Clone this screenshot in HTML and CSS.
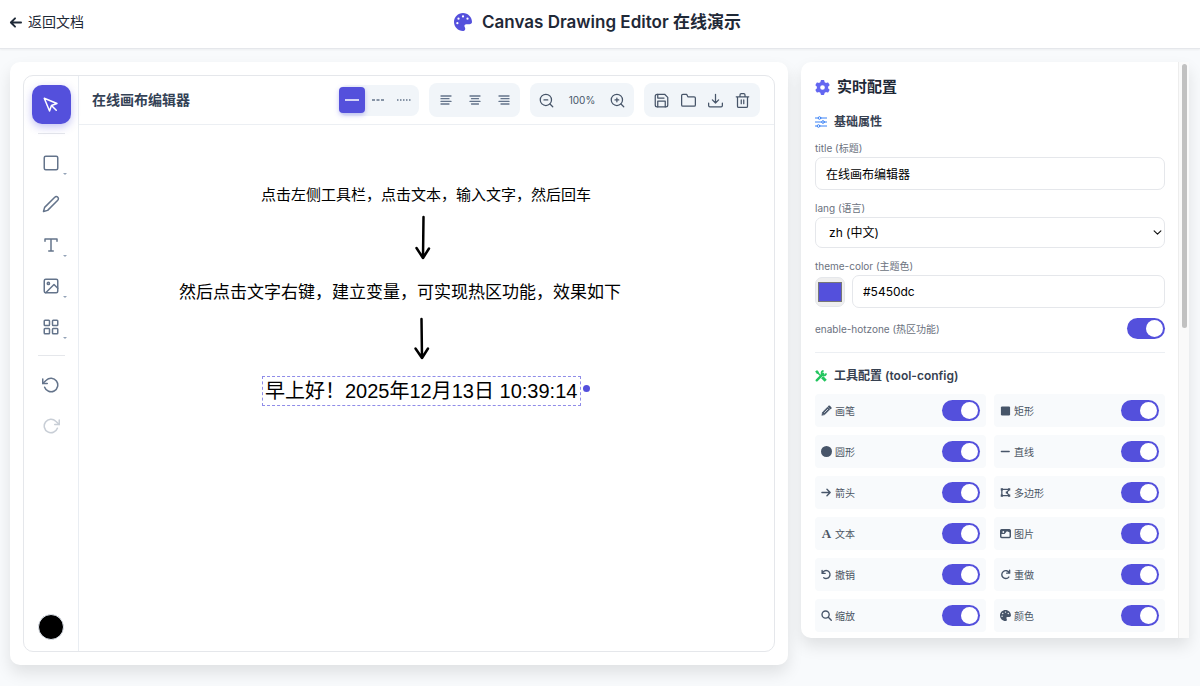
FILE: index.html
```
<!DOCTYPE html>
<html lang="zh">
<head>
    <meta charset="UTF-8">
    <meta name="viewport" content="width=device-width, initial-scale=1.0">
    <title>Canvas Drawing Editor 在线演示</title>
    <link rel="stylesheet" href="styles.css">
</head>
<body>
    <!-- shared icons -->
    <svg class="sprite" aria-hidden="true">
        <symbol id="palette" viewBox="0 0 512 512">
            <path fill="currentColor" stroke="none" d="M512 256c0 .9 0 1.8 0 2.7c-.4 36.5-33.6 61.3-70.1 61.3L344 320c-26.5 0-48 21.5-48 48c0 3.4 .4 6.7 1 9.9c2.1 10.2 6.5 20 10.8 29.9c6.1 13.8 12.1 27.5 12.1 42c0 31.8-21.6 60.7-53.4 62c-3.5 .1-7 .2-10.6 .2C114.6 512 0 397.4 0 256S114.6 0 256 0S512 114.6 512 256zM128 288a32 32 0 1 0 -64 0 32 32 0 1 0 64 0zm0-96a32 32 0 1 0 0-64 32 32 0 1 0 0 64zM288 96a32 32 0 1 0 -64 0 32 32 0 1 0 64 0zm96 96a32 32 0 1 0 0-64 32 32 0 1 0 0 64z"/>
        </symbol>
    </svg>

    <header class="header">
        <a class="back" href="#">
            <svg class="back-icon" viewBox="0 0 14 14"><path d="M13 7H2M6.500 2.500L2 7l4.500 4.500"/></svg>
            返回文档
        </a>
        <h1 class="page-title">
            <svg class="title-icon"><use href="#palette"/></svg>
            Canvas Drawing Editor 在线演示
        </h1>
    </header>

    <main class="main">
        <section class="card">
            <div class="editor">
                <div class="tools">
                    <button class="tool active" aria-label="选择"><svg viewBox="0 0 24 24"><path d="M3 3l7.070 16.970 2.510-7.390 7.390-2.510L3 3z"/><path d="M13 13l6 6"/></svg></button>
                    <div class="line"></div>
                    <button class="tool more" aria-label="矩形"><svg viewBox="0 0 24 24"><rect x="3" y="3" width="18" height="18" rx="2"/></svg></button>
                    <button class="tool" aria-label="画笔"><svg viewBox="0 0 24 24"><path d="M17 3a2.830 2.830 0 1 1 4 4L7.500 20.500 2 22l1.500-5.500L17 3z"/></svg></button>
                    <button class="tool more" aria-label="文本"><svg viewBox="0 0 24 24"><path d="M4 7V4h16v3M9 20h6M12 4v16"/></svg></button>
                    <button class="tool more" aria-label="图片"><svg viewBox="0 0 24 24"><rect x="3" y="3" width="18" height="18" rx="2"/><circle cx="8.500" cy="8.500" r="1.500"/><path d="M21 15l-5-5L5 21"/></svg></button>
                    <button class="tool more" aria-label="组件"><svg viewBox="0 0 24 24"><rect x="3" y="3" width="7" height="7" rx="1"/><rect x="14" y="3" width="7" height="7" rx="1"/><rect x="3" y="14" width="7" height="7" rx="1"/><rect x="14" y="14" width="7" height="7" rx="1"/></svg></button>
                    <div class="line"></div>
                    <button class="tool" aria-label="撤销"><svg viewBox="0 0 24 24"><path d="M1 4v6h6"/><path d="M3.510 15a9 9 0 1 0 2.130-9.360L1 10"/></svg></button>
                    <button class="tool" aria-label="重做" disabled><svg viewBox="0 0 24 24"><path d="M23 4v6h-6"/><path d="M20.490 15a9 9 0 1 1-2.120-9.360L23 10"/></svg></button>
                    <button class="current-color" aria-label="颜色"></button>
                </div>

                <div class="work">
                    <div class="topbar">
                        <h2 class="editor-title">在线画布编辑器</h2>
                        <div class="group group-lines">
                            <button class="line-btn active" aria-label="实线"><svg viewBox="0 0 16 16"><path d="M1 8h14"/></svg></button>
                            <button class="line-btn" aria-label="虚线"><svg viewBox="0 0 16 16"><path d="M2 8h12" stroke-dasharray="3 1.500"/></svg></button>
                            <button class="line-btn" aria-label="点线"><svg viewBox="0 0 16 16"><path d="M1 8h14" stroke-dasharray="1.500 1.500"/></svg></button>
                        </div>
                        <div class="group group-align">
                            <button class="bar-btn small" aria-label="左对齐"><svg viewBox="0 0 12 12"><path d="M1 2h10M1 4.700h8M1 7.400h10M1 10h8"/></svg></button>
                            <button class="bar-btn small" aria-label="居中"><svg viewBox="0 0 12 12"><path d="M1 2h10M2.500 4.700h7M1 7.400h10M2.500 10h7"/></svg></button>
                            <button class="bar-btn small" aria-label="右对齐"><svg viewBox="0 0 12 12"><path d="M1 2h10M3 4.700h8M1 7.400h10M3 10h8"/></svg></button>
                        </div>
                        <div class="group">
                            <button class="bar-btn" aria-label="缩小"><svg viewBox="0 0 24 24"><circle cx="11" cy="11" r="9"/><path d="M22 22l-4.500-4.500M8 11h6"/></svg></button>
                            <span class="zoom">100%</span>
                            <button class="bar-btn" aria-label="放大"><svg viewBox="0 0 24 24"><circle cx="11" cy="11" r="9"/><path d="M22 22l-4.500-4.500M8 11h6M11 8v6"/></svg></button>
                        </div>
                        <div class="group group-files">
                            <button class="bar-btn" aria-label="保存"><svg viewBox="0 0 24 24"><path d="M19 22H5a3 3 0 0 1-3-3V5a3 3 0 0 1 3-3h12l5 5v12a3 3 0 0 1-3 3z"/><path d="M18 22v-9H6v9M6 2v6h10"/></svg></button>
                            <button class="bar-btn" aria-label="打开"><svg viewBox="0 0 24 24"><path d="M23 19a2 2 0 0 1-2 2H3a2 2 0 0 1-2-2V4a2 2 0 0 1 2-2h6l2 4h10a2 2 0 0 1 2 2z"/></svg></button>
                            <button class="bar-btn" aria-label="导出"><svg viewBox="0 0 24 24"><path d="M23 16v4a2 2 0 0 1-2 2H3a2 2 0 0 1-2-2v-4M7 11l5 5 5-5M12 16V2"/></svg></button>
                            <button class="bar-btn" aria-label="删除"><svg viewBox="0 0 24 24"><path d="M2 6h20M20 6v15a2 2 0 0 1-2 2H6a2 2 0 0 1-2-2V6M8 6V3a2 2 0 0 1 2-2h4a2 2 0 0 1 2 2v3M10 11v6M14 11v6"/></svg></button>
                        </div>
                    </div>

                    <div class="canvas">
                        <p class="note note-one">点击左侧工具栏，点击文本，输入文字，然后回车</p>
                        <svg class="arrow arrow-one" viewBox="0 0 18 46"><path d="M9.500 2L9 43M2.500 33L9 43l6-9.500"/></svg>
                        <p class="note note-two">然后点击文字右键，建立变量，可实现热区功能，效果如下</p>
                        <svg class="arrow arrow-two" viewBox="0 0 18 46"><path d="M8.500 4L9 43M2.500 33.500L9 43l6-9.500"/></svg>
                        <p class="note hotzone">早上好！2025年12月13日 10:39:14</p>
                    </div>
                </div>
            </div>
        </section>

        <aside class="panel">
            <div class="config">
                <h2 class="config-title">
                    <svg class="gear" viewBox="0 0 512 512"><path fill="currentColor" d="M495.9 166.6c3.2 8.7 .5 18.4-6.4 24.6l-43.3 39.4c1.1 8.3 1.7 16.8 1.7 25.4s-.6 17.1-1.7 25.4l43.3 39.4c6.9 6.2 9.6 15.9 6.4 24.6c-4.4 11.9-9.7 23.3-15.8 34.3l-4.7 8.1c-6.6 11-14 21.4-22.1 31.2c-5.9 7.2-15.7 9.6-24.5 6.8l-55.7-17.7c-13.4 10.3-28.2 18.9-44 25.4l-12.5 57.1c-2 9.1-9 16.3-18.2 17.8c-13.8 2.3-28 3.5-42.5 3.5s-28.7-1.2-42.5-3.5c-9.2-1.5-16.2-8.7-18.2-17.8l-12.5-57.1c-15.8-6.5-30.6-15.1-44-25.4L83.1 425.9c-8.8 2.8-18.6 .3-24.5-6.8c-8.1-9.8-15.5-20.2-22.1-31.2l-4.7-8.1c-6.1-11-11.4-22.4-15.8-34.3c-3.2-8.7-.5-18.4 6.400-24.600l43.300-39.400C64.600 273.100 64 264.600 64 256s.6-17.100 1.700-25.400L22.400 191.200c-6.900-6.200-9.600-15.900-6.400-24.600c4.400-11.900 9.700-23.300 15.800-34.300l4.700-8.100c6.600-11 14-21.400 22.100-31.200c5.900-7.200 15.700-9.600 24.500-6.800l55.700 17.700c13.400-10.300 28.200-18.900 44-25.400l12.500-57.100c2-9.100 9-16.300 18.200-17.800C227.300 1.200 241.500 0 256 0s28.700 1.200 42.500 3.500c9.200 1.500 16.200 8.700 18.200 17.800l12.500 57.100c15.800 6.500 30.600 15.100 44 25.400l55.700-17.700c8.800-2.800 18.600-.3 24.500 6.800c8.100 9.800 15.500 20.200 22.100 31.200l4.700 8.100c6.100 11 11.400 22.400 15.800 34.300zM256 336a80 80 0 1 0 0-160 80 80 0 1 0 0 160z"/></svg>
                    实时配置
                </h2>

                <h3 class="section-title">
                    <svg class="sliders" viewBox="0 0 12 12"><path d="M0 2h3M6 2h6M0 6h6.500M9.500 6H12M0 10h2M5 10h7"/><circle cx="4.500" cy="2" r="1.300"/><circle cx="8" cy="6" r="1.300"/><circle cx="3.500" cy="10" r="1.300"/></svg>
                    基础属性
                </h3>
                <div class="field">
                    <label for="title">title (标题)</label>
                    <input class="box" id="title" type="text" value="在线画布编辑器">
                </div>
                <div class="field">
                    <label for="lang">lang (语言)</label>
                    <div class="select-wrap">
                        <select class="box" id="lang"><option>zh (中文)</option></select>
                        <svg class="chevron" viewBox="0 0 8 8"><path d="M1 2.500l3 3 3-3"/></svg>
                    </div>
                </div>
                <div class="field">
                    <label for="theme">theme-color (主题色)</label>
                    <div class="color-row">
                        <input class="swatch" type="color" value="#5450dc" aria-label="theme-color">
                        <input class="box" id="theme" type="text" value="#5450dc">
                    </div>
                </div>
                <div class="hotzone-row">
                    <label for="enable">enable-hotzone (热区功能)</label>
                    <input class="toggle" id="enable" type="checkbox" checked>
                </div>

                <h3 class="section-title tool-title">
                    <svg class="wrench" viewBox="0 0 14 14"><path d="M2 2l5 5" stroke-width="1.700"/><path d="M.7 1.700l1.700-1 2 1.800-1.900 1.900z" fill="#22c55e" stroke-width=".8"/><path d="M8.300 8.300l4.200 4.200" stroke-width="3.400"/><path d="M2 12l7.500-7.500" stroke-width="2.800" stroke-linecap="round"/><path d="M13 4A2.700 2.700 0 1 1 10 1" stroke-width="2"/></svg>
                    工具配置 (tool-config)
                </h3>
                <div class="tool-grid">
                    <label class="item"><svg viewBox="0 0 12 12"><path d="M1 11l.7-3.200 5.600-5.600 2.500 2.500L4.200 10.300z" fill="currentColor" stroke-width=".6"/><path d="M8.900 1.700l1.500 1.500" stroke-width="2.400"/><path d="M3.800 8.200l3.600-3.600" stroke="#f8fafc" stroke-width=".8"/></svg>画笔<input class="toggle" type="checkbox" checked></label>
                    <label class="item"><svg viewBox="0 0 12 12"><rect x="1" y="1.500" width="10" height="10" rx="1.300" fill="currentColor" stroke="none"/></svg>矩形<input class="toggle" type="checkbox" checked></label>
                    <label class="item"><svg viewBox="0 0 12 12"><circle cx="6" cy="6" r="6" fill="currentColor" stroke="none"/></svg>圆形<input class="toggle" type="checkbox" checked></label>
                    <label class="item"><svg viewBox="0 0 12 12"><path d="M1.500 6h8.500"/></svg>直线<input class="toggle" type="checkbox" checked></label>
                    <label class="item"><svg viewBox="0 0 12 12"><path d="M1 6h9M6.500 2.500L10 6 6.500 9.500"/></svg>箭头<input class="toggle" type="checkbox" checked></label>
                    <label class="item"><svg viewBox="0 0 12 12"><path d="M2 2.500h8L7.500 6 10 9.500H2z" stroke-width="1.400"/><path d="M.8 2.500h2.400M8.800 2.500h2.400M.8 9.500h2.400M8.800 9.500h2.400M6.300 6h2.400" stroke-width="2.400" stroke-linecap="butt"/></svg>多边形<input class="toggle" type="checkbox" checked></label>
                    <label class="item"><span class="letter">A</span>文本<input class="toggle" type="checkbox" checked></label>
                    <label class="item"><svg viewBox="0 0 12 12"><rect x=".8" y="1.800" width="10.400" height="8.600" rx="1" stroke-width="1.600"/><path d="M1 2h10v3L7.500 3.500 5 6.500H1z" fill="currentColor" stroke="none"/><circle cx="3.600" cy="4.400" r="1" fill="#f8fafc" stroke="none"/><path d="M2.300 9l1.800-2.400 1.200 1.100L7.500 4.800 9.900 9z" fill="#f8fafc" stroke="none"/></svg>图片<input class="toggle" type="checkbox" checked></label>
                    <label class="item"><svg viewBox="0 0 12 12"><path d="M1.200 1.500v3.300h3.300M1.500 4.500A4.300 4.300 0 1 1 3 9.500"/></svg>撤销<input class="toggle" type="checkbox" checked></label>
                    <label class="item"><svg viewBox="0 0 12 12"><path d="M10.500 1.300v3.200H7.300M10 4A4.300 4.300 0 1 0 9.600 8.800"/></svg>重做<input class="toggle" type="checkbox" checked></label>
                    <label class="item"><svg viewBox="0 0 12 12"><circle cx="5" cy="5" r="3.900"/><path d="M8 8l3.200 3.200"/></svg>缩放<input class="toggle" type="checkbox" checked></label>
                    <label class="item"><svg><use href="#palette"/></svg>颜色<input class="toggle" type="checkbox" checked></label>
                </div>
            </div>
            <div class="scrollbar"><div class="thumb"></div></div>
        </aside>
    </main>
</body>
</html>
```

FILE: styles.css
```
* {
    box-sizing: border-box;
}
body {
    margin: 0;
    min-height: 100vh;
    background: #f8fafc;
    font-family: Inter, "Noto Sans CJK SC", sans-serif;
    color: #1f2937;
}
button {
    border: 0;
    padding: 0;
    background: none;
    cursor: pointer;
}
h1, h2, h3, p {
    margin: 0;
}
svg {
    flex: none;
    fill: none;
    stroke-linecap: round;
    stroke-linejoin: round;
}
.sprite {
    display: none;
}

/* header */
.header {
    display: grid;
    grid-template-columns: 1fr auto 1fr;
    align-items: center;
    height: 49px;
    padding: 0 14px 4px 9px;
    background: #fff;
    border-bottom: 1px solid #e5e7eb;
    box-shadow: 0 1px 2px rgba(0, 0, 0, 0.05);
}
.back {
    display: flex;
    align-items: center;
    gap: 6px;
    font-size: 14px;
    line-height: 20px;
    color: #1f2937;
    text-decoration: none;
}
.back-icon {
    width: 13px;
    height: 13px;
    stroke: currentColor;
    stroke-width: 2;
}
.page-title {
    display: flex;
    align-items: center;
    gap: 10px;
    font-size: 17px;
    line-height: 24px;
    font-weight: 600;
}
.title-icon {
    width: 18px;
    height: 18px;
    color: #5450dc;
}

.main {
    display: grid;
    grid-template-columns: 1fr 388px;
    align-items: start;
    gap: 13px;
    padding: 13px 11px 20px 10px;
}

/* editor */
.card {
    padding: 13px;
    background: #fff;
    border-radius: 10px;
    box-shadow: 0 8px 16px rgba(0, 0, 0, 0.1);
}
.editor {
    display: flex;
    height: calc(100vh - 109px);
    min-height: 520px;
    border: 1px solid #e5e7eb;
    border-radius: 10px;
    overflow: hidden;
}
.tools {
    display: flex;
    flex-direction: column;
    align-items: center;
    gap: 2px;
    width: 55px;
    padding: 9px 0 11px;
    border-right: 1px solid #e9edf2;
}
.tool {
    position: relative;
    display: flex;
    align-items: center;
    justify-content: center;
    width: 39px;
    height: 39px;
    border-radius: 10px;
    color: #64748b;
}
.tool svg {
    width: 18px;
    height: 18px;
    stroke: currentColor;
    stroke-width: 2;
}
.tool.active {
    background: #5450dc;
    color: #fff;
    box-shadow: 0 3px 8px rgba(84, 80, 220, 0.35);
}
.tool:disabled {
    opacity: 0.35;
}
/* small mark for tools with a submenu */
.more::after {
    content: "";
    position: absolute;
    right: 4px;
    bottom: 7px;
    border: 2px solid transparent;
    border-top-color: #94a3b8;
    border-bottom: 0;
}
.line {
    width: 27px;
    height: 1px;
    margin: 7px 0;
    background: #e5e7eb;
}
.current-color {
    width: 26px;
    height: 26px;
    margin-top: auto;
    border: 1px solid #e2e8f0;
    border-radius: 50%;
    background: #000;
}
.work {
    display: flex;
    flex: 1;
    flex-direction: column;
    min-width: 0;
}
.topbar {
    display: flex;
    align-items: center;
    gap: 10px;
    height: 49px;
    padding: 0 14px 0 13px;
    border-bottom: 1px solid #eceff3;
}
.editor-title {
    margin-right: auto;
    font-size: 14px;
    line-height: 20px;
    font-weight: 600;
    color: #334155;
}
.group {
    display: flex;
    align-items: center;
    height: 34px;
    padding: 0 3px;
    border-radius: 8px;
    background: #f1f5f9;
    color: #475569;
}
.group-lines {
    height: 31px;
    padding: 0 2px 0 0;
}
.group-align {
    gap: 2px;
}
.group-files {
    padding: 0 4px;
}
.line-btn {
    width: 26px;
    height: 26px;
    border-radius: 4px;
    color: #64748b;
}
.line-btn.active {
    background: #5450dc;
    color: #fff;
    box-shadow: 0 2px 5px rgba(84, 80, 220, 0.35);
}
.line-btn svg {
    display: block;
    width: 16px;
    height: 16px;
    margin: auto;
    stroke: currentColor;
    stroke-width: 1.5;
    stroke-linecap: butt;
}
.bar-btn {
    width: 27px;
    height: 27px;
    color: #475569;
}
.bar-btn svg {
    display: block;
    width: 15px;
    height: 15px;
    margin: auto;
    stroke: currentColor;
    stroke-width: 2;
}
.bar-btn.small {
    color: #64748b;
}
.bar-btn.small svg {
    width: 12px;
    height: 12px;
    stroke-width: 1.3;
}
.zoom {
    width: 44px;
    font-size: 10px;
    text-align: center;
}

/* drawing area */
.canvas {
    position: relative;
    flex: 1;
    color: #000;
}
.note {
    position: absolute;
    white-space: nowrap;
    font-family: "Liberation Sans", "Noto Sans CJK SC", sans-serif;
}
.note-one {
    left: 182px;
    top: 58px;
    font-size: 15px;
    line-height: 24px;
}
.note-two {
    left: 100px;
    top: 156px;
    font-size: 17px;
    line-height: 24px;
}
.arrow {
    position: absolute;
    width: 18px;
    height: 46px;
    stroke: #000;
    stroke-width: 2.5;
}
.arrow-one {
    left: 335px;
    top: 90px;
}
.arrow-two {
    left: 334px;
    top: 190px;
}
.hotzone {
    left: 183px;
    top: 251px;
    padding: 1px 3px 0 2px;
    border: 1px dashed #8f8ce8;
    font-size: 20px;
    line-height: 27px;
}
.hotzone::after {
    content: "";
    position: absolute;
    right: -10px;
    top: 8px;
    width: 7px;
    height: 7px;
    border-radius: 50%;
    background: #5450dc;
}

/* config panel */
.panel {
    display: flex;
    background: #fff;
    border-radius: 10px 0 0 10px;
    box-shadow: 0 8px 16px rgba(0, 0, 0, 0.1);
}
.config {
    flex: 1;
    min-width: 0;
    padding: 14px 13px 6px 14px;
}
.scrollbar {
    width: 11px;
    padding: 2px 2px 0 3px;
    background: #fafafa;
    border-left: 1px solid #ededed;
}
.thumb {
    height: 46%;
    border-radius: 4px;
    background: #c1c1c1;
}
.config-title {
    display: flex;
    align-items: center;
    gap: 7px;
    margin-bottom: 14px;
    font-size: 15px;
    line-height: 22px;
    font-weight: 600;
}
.gear {
    width: 15px;
    height: 15px;
    color: #6366f1;
}
.section-title {
    display: flex;
    align-items: center;
    gap: 7px;
    font-size: 12px;
    line-height: 20px;
    font-weight: 600;
    color: #374151;
}
.sliders,
.wrench {
    width: 12px;
    height: 12px;
    stroke: #3b82f6;
}
.wrench {
    stroke: #22c55e;
    stroke-linecap: butt;
}
.field {
    margin-top: 9px;
}
.section-title + .field {
    margin-top: 7px;
}
.field label,
.hotzone-row {
    font-size: 10px;
    line-height: 18px;
    color: #6b7280;
}
.field label {
    display: block;
}
.box {
    display: block;
    width: 100%;
    height: 33px;
    padding: 0 10px;
    border: 1px solid #e5e7eb;
    border-radius: 7px;
    background: #fff;
    font-family: inherit;
    font-size: 12px;
    color: #000;
}
select.box {
    height: 31px;
    padding: 0 13px;
    appearance: none;
}
.select-wrap {
    position: relative;
}
.chevron {
    position: absolute;
    right: 3px;
    top: 11px;
    width: 9px;
    height: 9px;
    stroke: #111;
    pointer-events: none;
}
.color-row {
    display: flex;
    align-items: center;
    gap: 7px;
}
.swatch {
    flex: none;
    width: 30px;
    height: 30px;
    padding: 4px 2px;
    border: 1px solid #e5e7eb;
    border-radius: 7px;
    background: #efefef;
}
.swatch::-webkit-color-swatch-wrapper {
    padding: 0;
}
.swatch::-webkit-color-swatch {
    border: 1px solid #777;
}
.hotzone-row {
    display: flex;
    align-items: center;
    justify-content: space-between;
    padding: 10px 0 13px;
    border-bottom: 1px solid #eceff3;
}
.toggle {
    position: relative;
    flex: none;
    width: 38px;
    height: 21px;
    margin: 0;
    border-radius: 11px;
    background: #cbd5e1;
    appearance: none;
    cursor: pointer;
}
.toggle::before {
    content: "";
    position: absolute;
    top: 2px;
    left: 2px;
    width: 17px;
    height: 17px;
    border-radius: 50%;
    background: #fff;
}
.toggle:checked {
    background: #5450dc;
}
.toggle:checked::before {
    left: 19px;
}
.tool-title {
    margin: 13px 0 8px;
}
.tool-grid {
    display: grid;
    grid-template-columns: 1fr 1fr;
    gap: 8px;
}
.item {
    display: flex;
    align-items: center;
    gap: 3px;
    height: 33px;
    padding: 0 6px;
    border-radius: 4px;
    background: #f8fafc;
    font-size: 10px;
    color: #4b5563;
}
.item svg {
    width: 11px;
    height: 11px;
    color: #475569;
    stroke: currentColor;
    stroke-width: 1.5;
}
.item .toggle {
    margin-left: auto;
}
.letter {
    width: 11px;
    font-family: "Liberation Serif", serif;
    font-size: 13px;
    font-weight: 700;
    text-align: center;
}
```
